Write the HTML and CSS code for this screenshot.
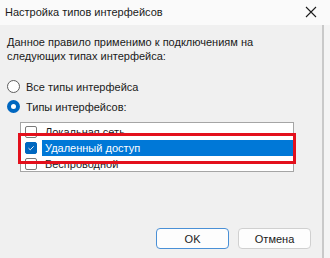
FILE: index.html
```html
<!DOCTYPE html>
<html lang="ru">
<head>
    <meta charset="UTF-8">
    <title>Настройка типов интерфейсов</title>
    <link rel="stylesheet" href="styles.css">
</head>
<body>
    <div class="titlebar">
        <span class="title">Настройка типов интерфейсов</span>
        <svg class="close" width="12" height="12" viewBox="0 0 12 12">
            <path d="M1 1 L11 11 M11 1 L1 11" stroke="#1b1b1b" stroke-width="1.1" fill="none"/>
        </svg>
    </div>
    <div class="wrap">
        <div class="dialog">
            <p class="intro">Данное правило применимо к подключениям на<br>следующих типах интерфейса:</p>
            <div class="radios">
                <label class="radio"><span class="dot"></span>Все типы интерфейса</label>
                <label class="radio radio--on"><span class="dot"></span>Типы интерфейсов:</label>
            </div>
            <div class="listbox">
                <div class="item"><span class="check"></span><span class="label">Локальная сеть</span></div>
                <div class="item item--sel">
                    <span class="check check--on">
                        <svg width="12" height="12" viewBox="0 0 12 12"><path d="M3 6.2 L5.1 8.2 L9.2 4" stroke="#fff" stroke-width="1.1" fill="none"/></svg>
                    </span>
                    <span class="label">Удаленный доступ</span>
                </div>
                <div class="item"><span class="check"></span><span class="label">Беспроводной</span></div>
                <div class="mark"></div>
            </div>
            <div class="buttons">
                <button class="btn btn--default">OK</button>
                <button class="btn">Отмена</button>
            </div>
        </div>
        <div class="edge"></div>
    </div>
</body>
</html>
```

FILE: styles.css
```css
html, body {
    margin: 0;
    padding: 0;
    width: 330px;
    height: 258px;
    overflow: hidden;
    background: #f0f0f0;
    font-family: "Liberation Sans", Arial, sans-serif;
    font-size: 11px;
    color: #1a1a1a;
}
.titlebar {
    height: 25px;
    background: #fafafa;
    display: flex;
    align-items: center;
    justify-content: space-between;
    padding: 0 13px 2px 5px;
    box-sizing: border-box;
}
.title {
    font-size: 11px;
    color: #1b1b1b;
}
.wrap {
    display: flex;
    height: 233px;
}
.dialog {
    width: 324px;
    padding-left: 7px;
    box-sizing: border-box;
}
.edge {
    width: 6px;
    border-left: 2px solid #c9c9c9;
    background: #f4f4f4;
}
.intro {
    margin: 10px 0 0;
    line-height: 14px;
}
.radios {
    margin-top: 17px;
    display: flex;
    flex-direction: column;
    gap: 7px;
}
.radio {
    display: flex;
    align-items: center;
    height: 13px;
}
.dot {
    width: 11px;
    height: 11px;
    border: 1px solid #5e5e5e;
    border-radius: 50%;
    margin-right: 6px;
    box-sizing: content-box;
    background: #fff;
}
.radio--on .dot {
    width: 5px;
    height: 5px;
    border: 4px solid #0067c0;
}
.listbox {
    position: relative;
    margin: 9px 0 0 13px;
    width: 274px;
    height: 50px;
    border: 1px solid #a5a5a5;
    background: #fff;
    box-sizing: border-box;
    padding-top: 1px;
}
.item {
    display: flex;
    align-items: center;
    height: 16px;
    padding-left: 4px;
}
.check {
    width: 10px;
    height: 10px;
    border: 1px solid #7a7a7a;
    border-radius: 2px;
    background: #fff;
    margin-right: 5px;
    display: flex;
    align-items: center;
    justify-content: center;
}
.check--on {
    background: #0067c0;
    border-color: #0067c0;
}
.label {
    flex: 1;
    height: 16px;
    line-height: 16px;
    padding-left: 3px;
}
.item--sel .label {
    background: #0078d7;
    color: #fff;
}
.mark {
    position: absolute;
    left: -3px;
    top: 10px;
    width: 272px;
    height: 25px;
    border: 3px solid #e3101c;
}
.buttons {
    margin-top: 56px;
    display: flex;
    justify-content: flex-end;
    gap: 9px;
    padding-right: 11px;
}
.btn {
    width: 73px;
    height: 21px;
    font-family: inherit;
    font-size: 11px;
    color: #1a1a1a;
    background: #fdfdfd;
    border: 1px solid #d0d0d0;
    border-radius: 4px;
    padding: 0;
}
.btn--default {
    border-color: #4a90d6;
}
```
